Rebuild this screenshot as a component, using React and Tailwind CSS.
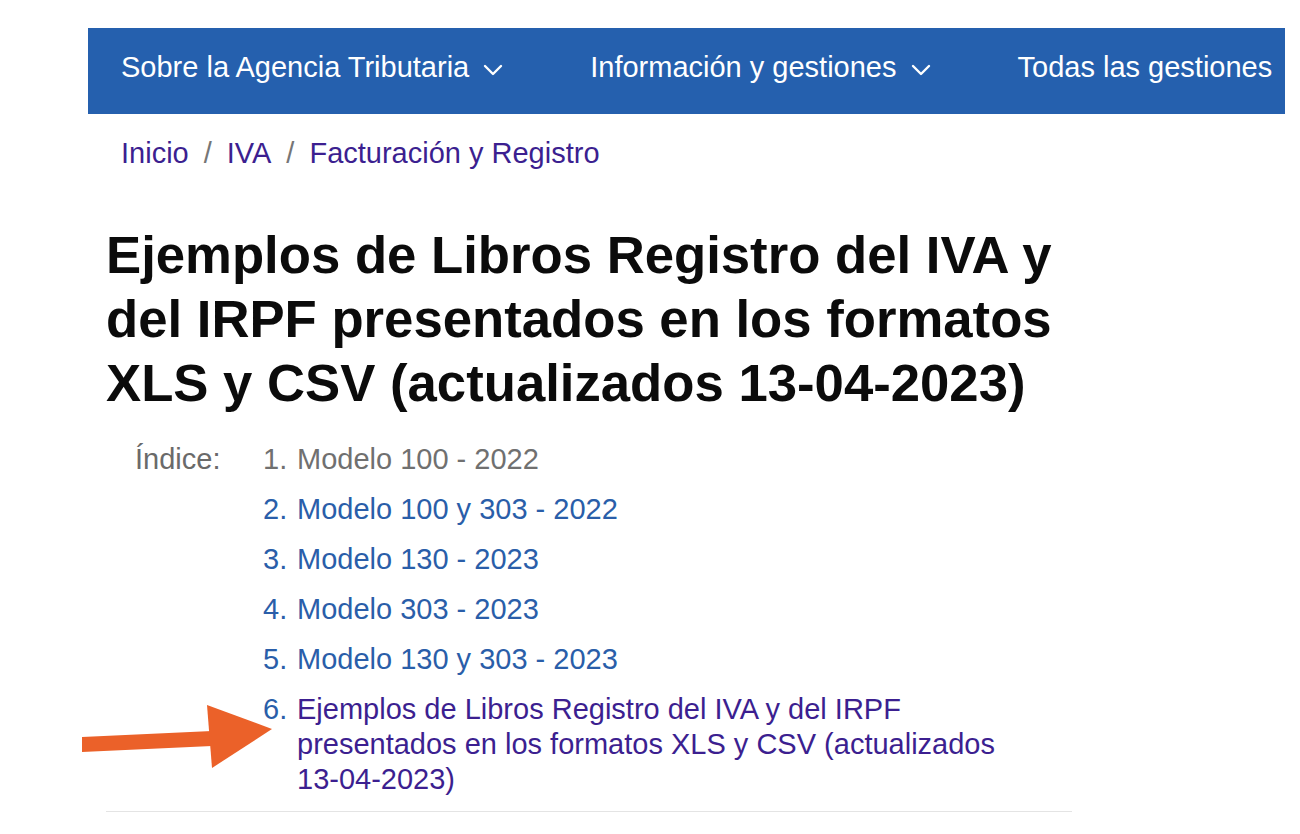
import React from "react";

const NAV_ITEMS = [
  { label: "Sobre la Agencia Tributaria", menu: true },
  { label: "Información y gestiones", menu: true },
  { label: "Todas las gestiones", menu: false },
];

const INDEX_ITEMS = [
  { n: 1, label: "Modelo 100 - 2022", state: "current" },
  { n: 2, label: "Modelo 100 y 303 - 2022", state: "link" },
  { n: 3, label: "Modelo 130 - 2023", state: "link" },
  { n: 4, label: "Modelo 303 - 2023", state: "link" },
  { n: 5, label: "Modelo 130 y 303 - 2023", state: "link" },
  {
    n: 6,
    label: "Ejemplos de Libros Registro del IVA y del IRPF presentados en los formatos XLS y CSV (actualizados",
    tail: "13-04-2023)",
    state: "visited",
  },
];

function Chevron() {
  return (
    <svg width="20" height="12" viewBox="0 0 20 12" className="ml-[14px] mt-[4px] shrink-0" fill="none">
      <polyline points="2,2 10,10 18,2" stroke="white" strokeWidth="2.4" strokeLinecap="round" strokeLinejoin="round" />
    </svg>
  );
}

export default function App() {
  return (
    <div className="relative min-h-[834px] w-[1300px] overflow-hidden bg-white font-['Liberation_Sans',Arial,sans-serif]">
      <nav className="ml-[88px] mt-[28px] flex h-[86px] w-[1197px] items-center overflow-hidden whitespace-nowrap bg-[#2560ae] pb-[6px] pl-[33px] text-[29px] text-white">
        {NAV_ITEMS.map((item) => (
          <div key={item.label} className="mr-[87px] flex shrink-0 items-center">
            <span>{item.label}</span>
            {item.menu && <Chevron />}
          </div>
        ))}
      </nav>

      <div className="ml-[121px] mt-[22px] flex h-[35px] items-center text-[29px] leading-[35px]">
        <a className="text-[#3c1f90]">Inicio</a>
        <span className="mx-[15px] text-[#767676]">/</span>
        <a className="text-[#3c1f90]">IVA</a>
        <span className="mx-[15px] text-[#767676]">/</span>
        <a className="text-[#3c1f90]">Facturación y Registro</a>
      </div>

      <div className="ml-[106px] w-[966px]">
        <h1 className="mt-[52px] text-[52.7px] font-bold leading-[64px] text-[#0b0b0b]">
          Ejemplos de Libros Registro del IVA y del IRPF presentados en los formatos XLS y CSV (actualizados 13-04-2023)
        </h1>

        <div className="mt-[27px] flex pl-[29px] text-[29px] leading-[35px]">
          <div className="w-[128px] shrink-0 text-[#6a6a6a]">Índice:</div>
          <ol className="flex w-[790px] flex-col gap-[15px]">
            {INDEX_ITEMS.map((item) => (
              <li key={item.n} className="flex">
                <span className={`w-[34px] shrink-0 ${item.state === "current" ? "text-[#707070]" : "text-[#2a5ea9]"}`}>
                  {item.n}.
                </span>
                <a
                  className={
                    item.state === "current"
                      ? "text-[#707070]"
                      : item.state === "visited"
                        ? "text-[#3c1f90]"
                        : "text-[#2a5ea9]"
                  }
                >
                  {item.label}
                  {item.tail && (
                    <>
                      {" "}
                      <span className="whitespace-nowrap">{item.tail}</span>
                    </>
                  )}
                </a>
              </li>
            ))}
          </ol>
        </div>

        <div className="mt-[14px] h-px w-[966px] bg-[#e4e4e4]" />
      </div>

      <svg className="pointer-events-none absolute left-0 top-0" width="1300" height="834" viewBox="0 0 1300 834">
        <polygon points="82,737 212,731 212,746 82,752" fill="#eb6129" />
        <polygon points="207,705 272,729 212,768" fill="#eb6129" />
      </svg>
    </div>
  );
}
